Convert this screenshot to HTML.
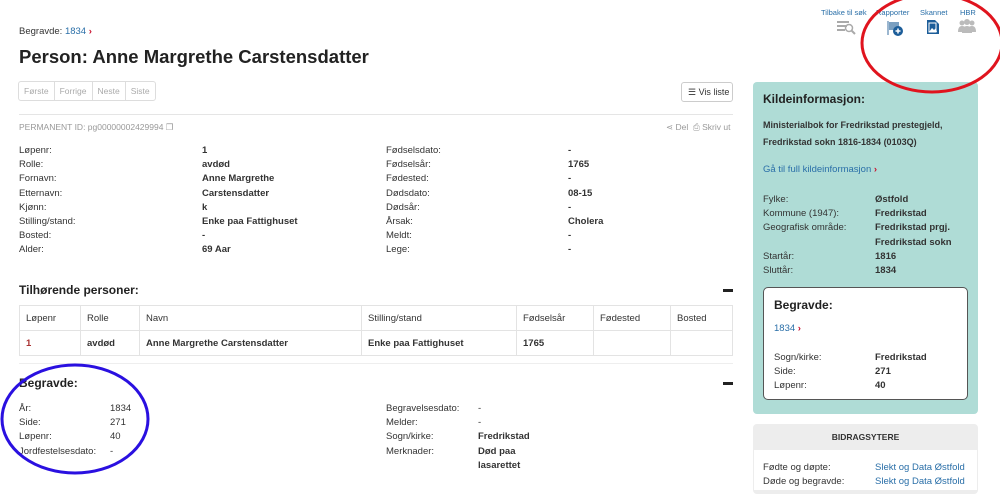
<!DOCTYPE html>
<html><head><meta charset="utf-8"><style>
*{margin:0;padding:0;box-sizing:border-box}
body{width:1000px;height:484px;overflow:hidden;background:#fff;font-family:"Liberation Sans",sans-serif;font-size:9.5px;color:#333;position:relative}
.a{position:absolute;white-space:nowrap}
.b{font-weight:bold}
.l{color:#2a6fa8}
.chev{color:#c8102e;font-weight:bold}
.g{color:#999}
table{border-collapse:collapse;position:absolute;left:19px;top:305px;width:714px}
td{border:1px solid #e3e3e3;padding:0 6px;height:25px;font-size:9.5px}
</style></head><body>
<div class="a" style="left:19px;top:26px">Begravde: <span class="l">1834</span> <span class="chev">›</span></div>
<div class="a b" style="left:19px;top:46px;font-size:18.5px;color:#222">Person: Anne Margrethe Carstensdatter</div>
<div class="a" style="left:18px;top:81px;height:20px;border:1px solid #ddd;border-radius:3px;display:flex;color:#aaa;font-size:8.5px">
<span style="padding:4px 5px;border-right:1px solid #ddd">Første</span><span style="padding:4px 5px;border-right:1px solid #ddd">Forrige</span><span style="padding:4px 5px;border-right:1px solid #ddd">Neste</span><span style="padding:4px 5px">Siste</span></div>
<div class="a" style="left:681px;top:82px;width:52px;height:20px;border:1px solid #ccc;border-radius:3px;padding:4px 0 0 6px;font-size:9px;color:#333">☰ Vis liste</div>
<div class="a" style="left:19px;top:114px;width:714px;border-top:1px solid #e5e5e5"></div>
<div class="a g" style="left:19px;top:122px;font-size:8.5px">PERMANENT ID: pg00000002429994 ❐</div>
<div class="a g" style="left:666px;top:122px;font-size:8.5px">⋖ Del &nbsp;⎙ Skriv ut</div>

<div class="a" style="left:19px;top:144px;line-height:14.2px">Løpenr:<br>Rolle:<br>Fornavn:<br>Etternavn:<br>Kjønn:<br>Stilling/stand:<br>Bosted:<br>Alder:</div>
<div class="a b" style="left:202px;top:144px;line-height:14.2px">1<br>avdød<br>Anne Margrethe<br>Carstensdatter<br>k<br>Enke paa Fattighuset<br>-<br>69 Aar</div>
<div class="a" style="left:386px;top:144px;line-height:14.2px">Fødselsdato:<br>Fødselsår:<br>Fødested:<br>Dødsdato:<br>Dødsår:<br>Årsak:<br>Meldt:<br>Lege:</div>
<div class="a b" style="left:568px;top:144px;line-height:14.2px">-<br>1765<br>-<br>08-15<br>-<br>Cholera<br>-<br>-</div>

<div class="a b" style="left:19px;top:283px;font-size:12px;color:#222">Tilhørende personer:</div>
<div class="a" style="left:723px;top:289px;width:10px;height:3px;background:#222"></div>
<table><tr><td style="width:61px">Løpenr</td><td style="width:59px">Rolle</td><td style="width:222px">Navn</td><td style="width:155px">Stilling/stand</td><td style="width:77px">Fødselsår</td><td style="width:77px">Fødested</td><td>Bosted</td></tr>
<tr class="b"><td style="color:#a33">1</td><td>avdød</td><td>Anne Margrethe Carstensdatter</td><td>Enke paa Fattighuset</td><td>1765</td><td></td><td></td></tr></table>
<div class="a" style="left:19px;top:363px;width:714px;border-top:1px solid #eee"></div>
<div class="a b" style="left:19px;top:376px;font-size:12px;color:#222">Begravde:</div>
<div class="a" style="left:723px;top:382px;width:10px;height:3px;background:#222"></div>
<div class="a" style="left:19px;top:402px;line-height:14.2px">År:<br>Side:<br>Løpenr:<br>Jordfestelsesdato:</div>
<div class="a" style="left:110px;top:402px;line-height:14.2px">1834<br>271<br>40<br>-</div>
<div class="a" style="left:386px;top:402px;line-height:14.2px">Begravelsesdato:<br>Melder:<br>Sogn/kirke:<br>Merknader:</div>
<div class="a" style="left:478px;top:402px;line-height:14.2px">-<br>-<br><b>Fredrikstad</b><br><b>Død paa<br>lasarettet</b></div>

<div class="a l" style="left:821px;top:8px;font-size:7.5px">Tilbake til søk</div>
<div class="a l" style="left:876px;top:8px;font-size:7.5px">Rapporter</div>
<div class="a l" style="left:920px;top:8px;font-size:7.5px">Skannet</div>
<div class="a l" style="left:960px;top:8px;font-size:7.5px">HBR</div>
<svg class="a" style="left:836px;top:19px" width="20" height="16"><g fill="#aaa"><rect x="1" y="2" width="12" height="2"/><rect x="1" y="6" width="10" height="2"/><rect x="1" y="10" width="8" height="2"/></g><circle cx="13" cy="9" r="3.5" fill="none" stroke="#aaa" stroke-width="1.5"/><line x1="15.5" y1="11.5" x2="19" y2="15" stroke="#aaa" stroke-width="2"/></svg>
<svg class="a" style="left:885px;top:19px" width="20" height="18"><path d="M3 2v14" stroke="#7a9fc0" stroke-width="1.5"/><path d="M4 3h10v8H4z" fill="#7a9fc0"/><circle cx="13" cy="12" r="5" fill="#1c5d99"/><path d="M10.5 12h5M13 9.5v5" stroke="#fff" stroke-width="1.5"/></svg>
<svg class="a" style="left:926px;top:19px" width="14" height="16"><path d="M1 1h8l4 4v10H1z" fill="#1c5d99"/><path d="M3 13l3-4 2 2 2-2 1 4z" fill="#fff"/><rect x="3" y="4" width="7" height="9" fill="none" stroke="#fff" stroke-width="1"/></svg>
<svg class="a" style="left:958px;top:19px" width="18" height="15"><g fill="#bbb"><circle cx="4" cy="4" r="2.5"/><circle cx="9" cy="3" r="3"/><circle cx="14" cy="4" r="2.5"/><path d="M0 13q0-6 4-6q5 0 5 6zM4 14q0-7 5-7t5 7zM9 13q0-6 5-6q4 0 4 6z"/></g></svg>

<div class="a" style="left:753px;top:82px;width:225px;height:332px;background:#afdcd6;border-radius:4px"></div>
<div class="a b" style="left:763px;top:92px;font-size:12px;color:#222">Kildeinformasjon:</div>
<div class="a b" style="left:763px;top:117px;line-height:17px;font-size:9px">Ministerialbok for Fredrikstad prestegjeld,<br>Fredrikstad sokn 1816-1834 (0103Q)</div>
<div class="a l" style="left:763px;top:164px">Gå til full kildeinformasjon <span class="chev">›</span></div>
<div class="a" style="left:763px;top:193px;line-height:14.2px">Fylke:<br>Kommune (1947):<br>Geografisk område:<br><br>Startår:<br>Sluttår:</div>
<div class="a b" style="left:875px;top:193px;line-height:14.2px">Østfold<br>Fredrikstad<br>Fredrikstad prgj.<br>Fredrikstad sokn<br>1816<br>1834</div>
<div class="a" style="left:763px;top:287px;width:205px;height:113px;background:#fff;border:1px solid #555;border-radius:5px"></div>
<div class="a b" style="left:774px;top:298px;font-size:12px;color:#222">Begravde:</div>
<div class="a l" style="left:774px;top:323px">1834 <span class="chev">›</span></div>
<div class="a" style="left:774px;top:351px;line-height:14.2px">Sogn/kirke:<br>Side:<br>Løpenr:</div>
<div class="a b" style="left:875px;top:351px;line-height:14.2px">Fredrikstad<br>271<br>40</div>
<div class="a" style="left:753px;top:424px;width:225px;height:70px;background:#ededed;border-radius:4px"></div>
<div class="a b" style="left:753px;top:432px;width:225px;text-align:center;font-size:8.5px">BIDRAGSYTERE</div>
<div class="a" style="left:754px;top:450px;width:223px;height:40px;background:#fff"></div>
<div class="a" style="left:763px;top:461px;line-height:14px">Fødte og døpte:<br>Døde og begravde:</div>
<div class="a l" style="left:875px;top:461px;line-height:14px">Slekt og Data Østfold<br>Slekt og Data Østfold</div>

<svg class="a" style="left:0;top:0" width="1000" height="484"><ellipse cx="932" cy="43" rx="70" ry="49" fill="none" stroke="#e0141e" stroke-width="3"/><ellipse cx="75" cy="419" rx="73" ry="54" fill="none" stroke="#2a10e0" stroke-width="3"/></svg>
</body></html>
